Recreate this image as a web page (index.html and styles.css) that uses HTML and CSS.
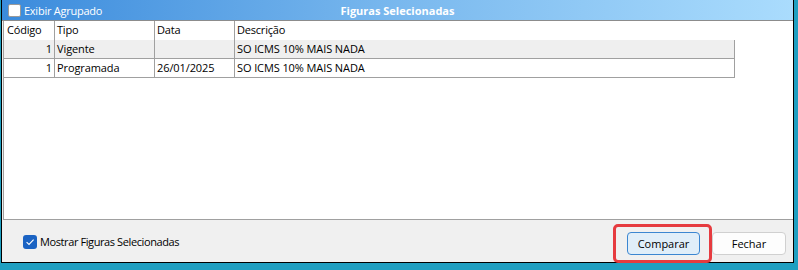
FILE: index.html
```html
<!DOCTYPE html>
<html lang="pt-BR">
<head>
    <meta charset="UTF-8">
    <title>Figuras Selecionadas</title>
    <link rel="stylesheet" href="styles.css">
</head>
<body>
    <div class="window">
        <div class="titlebar">
            <label class="group-toggle"><span class="box"></span>Exibir Agrupado</label>
            <div class="title">Figuras Selecionadas</div>
            <div></div>
        </div>

        <div class="grid-area">
            <div class="grid">
                <div class="head">Código</div>
                <div class="head">Tipo</div>
                <div class="head">Data</div>
                <div class="head last">Descrição</div>

                <div class="cell num odd">1</div>
                <div class="cell odd">Vigente</div>
                <div class="cell odd"></div>
                <div class="cell odd">SO ICMS 10% MAIS NADA</div>

                <div class="cell num">1</div>
                <div class="cell">Programada</div>
                <div class="cell">26/01/2025</div>
                <div class="cell">SO ICMS 10% MAIS NADA</div>
            </div>
        </div>

        <div class="footer">
            <label class="show-selected">
                <span class="check">
                    <svg width="14" height="14" viewBox="0 0 14 14">
                        <rect x="0" y="0" width="14" height="14" rx="3" fill="#1b63c3"/>
                        <path d="M3.6 7.2 L6 9.4 L10.6 4.6" fill="none" stroke="#fff" stroke-width="1.1"/>
                    </svg>
                </span>
                Mostrar Figuras Selecionadas
            </label>
            <div class="actions">
                <span class="highlight"><button class="btn btn-primary">Comparar</button></span>
                <button class="btn">Fechar</button>
            </div>
        </div>
    </div>
</body>
</html>
```

FILE: styles.css
```css
body {
    margin: 0;
    background: #1f9fc1;
    font-family: 'Open Sans', 'Noto Sans', sans-serif;
    font-size: 11px;
    color: #000;
}

.window {
    box-sizing: border-box;
    width: 793px;
    height: 263px;
    margin-left: 1px;
    border: 1px solid #000;
    border-top: none;
    background: #f0f0f0;
    display: flex;
    flex-direction: column;
}

/* Title bar */
.titlebar {
    height: 20px;
    border-bottom: 1px solid #8c8c8c;
    background: linear-gradient(to right, #3b8bdc 0%, #79b8ee 50%, #aadcfd 100%);
    display: grid;
    grid-template-columns: 1fr auto 1fr;
    align-items: center;
    color: #fff;
}

.group-toggle {
    display: flex;
    align-items: center;
    padding-left: 6px;
    letter-spacing: -0.25px;
}

.group-toggle .box {
    box-sizing: border-box;
    width: 13px;
    height: 13px;
    margin-right: 3px;
    background: #fff;
    border: 1px solid #9a9a9a;
    border-radius: 2px;
}

.title {
    font-weight: 700;
}

/* Grid area */
.grid-area {
    height: 198px;
    margin-left: 1px;
    background: #fff;
    border-left: 1px solid #a0a0a0;
    border-bottom: 1px solid #a0a0a0;
}

.grid {
    display: grid;
    grid-template-columns: 51px 100px 80px 500px;
}

.head,
.cell {
    box-sizing: border-box;
    height: 19px;
    line-height: 18px;
    padding: 0 2px;
    border-right: 1px solid #a0a0a0;
    white-space: nowrap;
}

.head {
    letter-spacing: -0.2px;
}

.head:first-child {
    padding-left: 3px;
}

.head.last {
    border-right: none;
}

.cell {
    border-bottom: 1px solid #a0a0a0;
    letter-spacing: -0.1px;
}

.cell.odd {
    background: #efefef;
}

.cell.num {
    text-align: right;
}

/* Footer */
.footer {
    flex: 1;
    box-sizing: border-box;
    padding: 4px 7px 0 21px;
    display: flex;
    align-items: center;
    justify-content: space-between;
}

.show-selected {
    display: flex;
    align-items: center;
    margin-bottom: 3px;
    letter-spacing: -0.4px;
}

.check {
    display: flex;
    margin-right: 3px;
}

.actions {
    display: flex;
    gap: 12px;
}

.btn {
    box-sizing: border-box;
    width: 74px;
    height: 23px;
    padding: 0;
    font-family: inherit;
    font-size: 11px;
    color: #000;
    background: #fdfdfd;
    border: 1px solid #d0d0d0;
    border-radius: 4px;
}

.btn-primary {
    width: 73px;
    background: #e0eef9;
    border-color: #3b86d1;
}

.highlight {
    position: relative;
    display: flex;
}

.highlight::after {
    content: "";
    position: absolute;
    top: -8px;
    bottom: -8px;
    left: -14px;
    right: -12px;
    border: 3px solid #e63b3f;
    border-radius: 5px;
    pointer-events: none;
}
```
